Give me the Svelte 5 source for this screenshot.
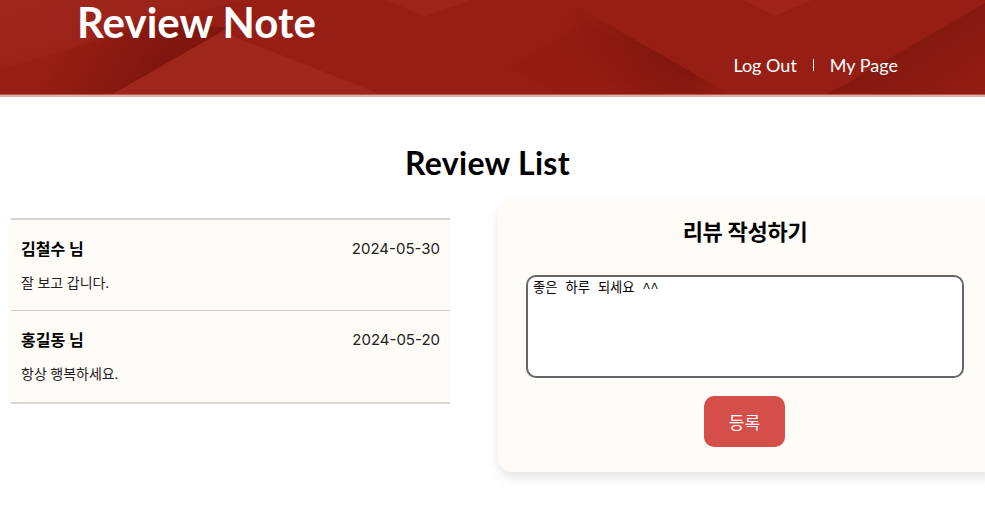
<script>
	let reviews = [
		{ name: "김철수 님", date: "2024-05-30", text: "잘 보고 갑니다." },
		{ name: "홍길동 님", date: "2024-05-20", text: "항상 행복하세요." }
	];
	let draft = "좋은 하루 되세요 ^^";
</script>

<div class="page">
	<header class="top">
		<svg class="pattern" viewBox="0 0 985 95" preserveAspectRatio="none" aria-hidden="true">
			<defs>
				<linearGradient id="leftGlow" x1="0" y1="0" x2="1" y2="1">
					<stop offset="0" stop-color="#a32a20" stop-opacity="0.7" />
					<stop offset="1" stop-color="#a32a20" stop-opacity="0" />
				</linearGradient>
				<linearGradient id="wedgeLeft" gradientUnits="userSpaceOnUse" x1="145" y1="85" x2="70" y2="40">
					<stop offset="0" stop-color="#7c150d" stop-opacity="0.85" />
					<stop offset="1" stop-color="#7c150d" stop-opacity="0" />
				</linearGradient>
				<linearGradient id="wedgeMid" gradientUnits="userSpaceOnUse" x1="660" y1="58" x2="632" y2="104">
					<stop offset="0" stop-color="#7c150d" stop-opacity="0.8" />
					<stop offset="1" stop-color="#7c150d" stop-opacity="0" />
				</linearGradient>
				<linearGradient id="midFade" gradientUnits="userSpaceOnUse" x1="575" y1="6" x2="725" y2="95">
					<stop offset="0" stop-color="#000" />
					<stop offset="0.55" stop-color="#fff" />
					<stop offset="0.75" stop-color="#fff" />
					<stop offset="1" stop-color="#000" />
				</linearGradient>
				<mask id="midMask" maskUnits="userSpaceOnUse" x="500" y="0" width="260" height="95">
					<rect x="500" y="0" width="260" height="95" fill="url(#midFade)" />
				</mask>
				<linearGradient id="wedgeRight" gradientUnits="userSpaceOnUse" x1="925" y1="38" x2="975" y2="115">
					<stop offset="0" stop-color="#7c150d" stop-opacity="0.65" />
					<stop offset="1" stop-color="#7c150d" stop-opacity="0" />
				</linearGradient>
			</defs>
			<polygon points="0,0 240,0 0,70" fill="url(#leftGlow)" />
			<polygon points="228,28 113,95 40,95 60,50 150,20" fill="url(#wedgeLeft)" />
			<polygon points="113,95 222,32 380,95" fill="#9f261c" />
			<polygon points="385,0 470,0 425,17" fill="#9f261c" opacity="0.7" />
			<polygon points="510,68 585,22 640,50 700,95 560,95" fill="#8a1810" opacity="0.18" />
			<polygon points="560,-3 730,95 560,95" fill="url(#wedgeMid)" mask="url(#midMask)" />
			<polygon points="743,0 812,0 775,16" fill="#a1281e" opacity="0.75" />
			<polygon points="985,3 985,95 828,95" fill="url(#wedgeRight)" />
		</svg>
		<h1 class="logo">Review Note</h1>
		<nav class="links">
			<a href="#logout">Log Out</a>
			<span class="sep"></span>
			<a href="#mypage">My Page</a>
		</nav>
	</header>

	<h2 class="title">Review List</h2>

	<main class="content">
		<section class="list">
			{#each reviews as r}
				<article class="item">
					<div class="row">
						<strong>{r.name}</strong>
						<span class="date">{r.date}</span>
					</div>
					<p>{r.text}</p>
				</article>
			{/each}
		</section>

		<section class="form">
			<h3>리뷰 작성하기</h3>
			<textarea bind:value={draft}></textarea>
			<button type="button">등록</button>
		</section>
	</main>
</div>

<style>
	:global(body) {
		margin: 0;
		background: #fff;
		overflow: hidden;
	}

	.page {
		width: 985px;
		height: 530px;
		overflow: hidden;
		font-family: Lato, "Noto Sans CJK KR", sans-serif;
		color: #000;
	}

	.top {
		position: relative;
		height: 94px;
		display: flex;
		justify-content: space-between;
		background: #961e14;
		border-bottom: 1px solid #b5574f;
		box-shadow: 0 2px 0 #dfaeaa;
		overflow: hidden;
	}

	.pattern {
		position: absolute;
		inset: 0;
		width: 100%;
		height: 100%;
	}

	.logo {
		position: relative;
		margin: 0 0 0 77px;
		font-size: 42px;
		line-height: 44px;
		font-weight: 700;
		color: #fff;
	}

	.links {
		position: relative;
		display: flex;
		align-items: center;
		height: 24px;
		margin: 53px 87px 0 0;
		font-size: 18px;
	}

	.links a {
		color: #fff;
		text-decoration: none;
	}

	.sep {
		width: 1px;
		height: 12px;
		margin: 0 16px;
		background: #fff;
	}

	.title {
		margin: 48px 10px 0 0;
		text-align: center;
		font-size: 32px;
		line-height: 40px;
		font-weight: 700;
		letter-spacing: 0.3px;
	}

	.content {
		display: flex;
		align-items: flex-start;
		margin-top: 16px;
		padding-left: 11px;
	}

	.list {
		flex: none;
		width: 439px;
		margin-top: 19px;
		border-top: 2px solid #d8d6d2;
		border-bottom: 2px solid #d8d6d2;
		background: #fffbf6;
	}

	.item {
		height: 90px;
		padding: 0 10px;
		box-sizing: border-box;
	}

	.item + .item {
		height: 92px;
		border-top: 1px solid #ccc9c6;
	}

	.row {
		display: flex;
		justify-content: space-between;
		align-items: center;
		padding-top: 18px;
		line-height: 22px;
	}

	.row strong {
		font-size: 16px;
		font-weight: 700;
	}

	.date {
		font-family: Inter, sans-serif;
		font-size: 15px;
		color: #222;
	}

	.item p {
		margin: 13px 0 0;
		font-size: 14px;
		line-height: 20px;
		color: #222;
	}

	.form {
		flex: none;
		width: 500px;
		height: 272px;
		margin: 1px 0 0 48px;
		padding: 0 28px;
		box-sizing: border-box;
		display: flex;
		flex-direction: column;
		background: #fffbf6;
		border-radius: 14px;
		box-shadow: 0 6px 12px rgba(0, 0, 0, 0.1);
	}

	.form h3 {
		width: 438px;
		margin: 17px 0 0;
		text-align: center;
		font-size: 22px;
		line-height: 30px;
		font-weight: 700;
		letter-spacing: -0.3px;
	}

	textarea {
		display: block;
		width: 438px;
		height: 103px;
		margin: 28px 0 0;
		padding: 0 5px;
		box-sizing: border-box;
		resize: none;
		outline: none;
		border: 2px solid #666;
		border-radius: 10px;
		background: #fff;
		font-family: "Liberation Mono", "Noto Sans CJK KR", monospace;
		font-size: 13.3px;
		color: #000;
	}

	button {
		width: 81px;
		height: 51px;
		margin: 18px 0 0 178px;
		border: none;
		border-radius: 10px;
		background: #d44f49;
		color: #fff;
		font-family: inherit;
		font-size: 17px;
	}
</style>
